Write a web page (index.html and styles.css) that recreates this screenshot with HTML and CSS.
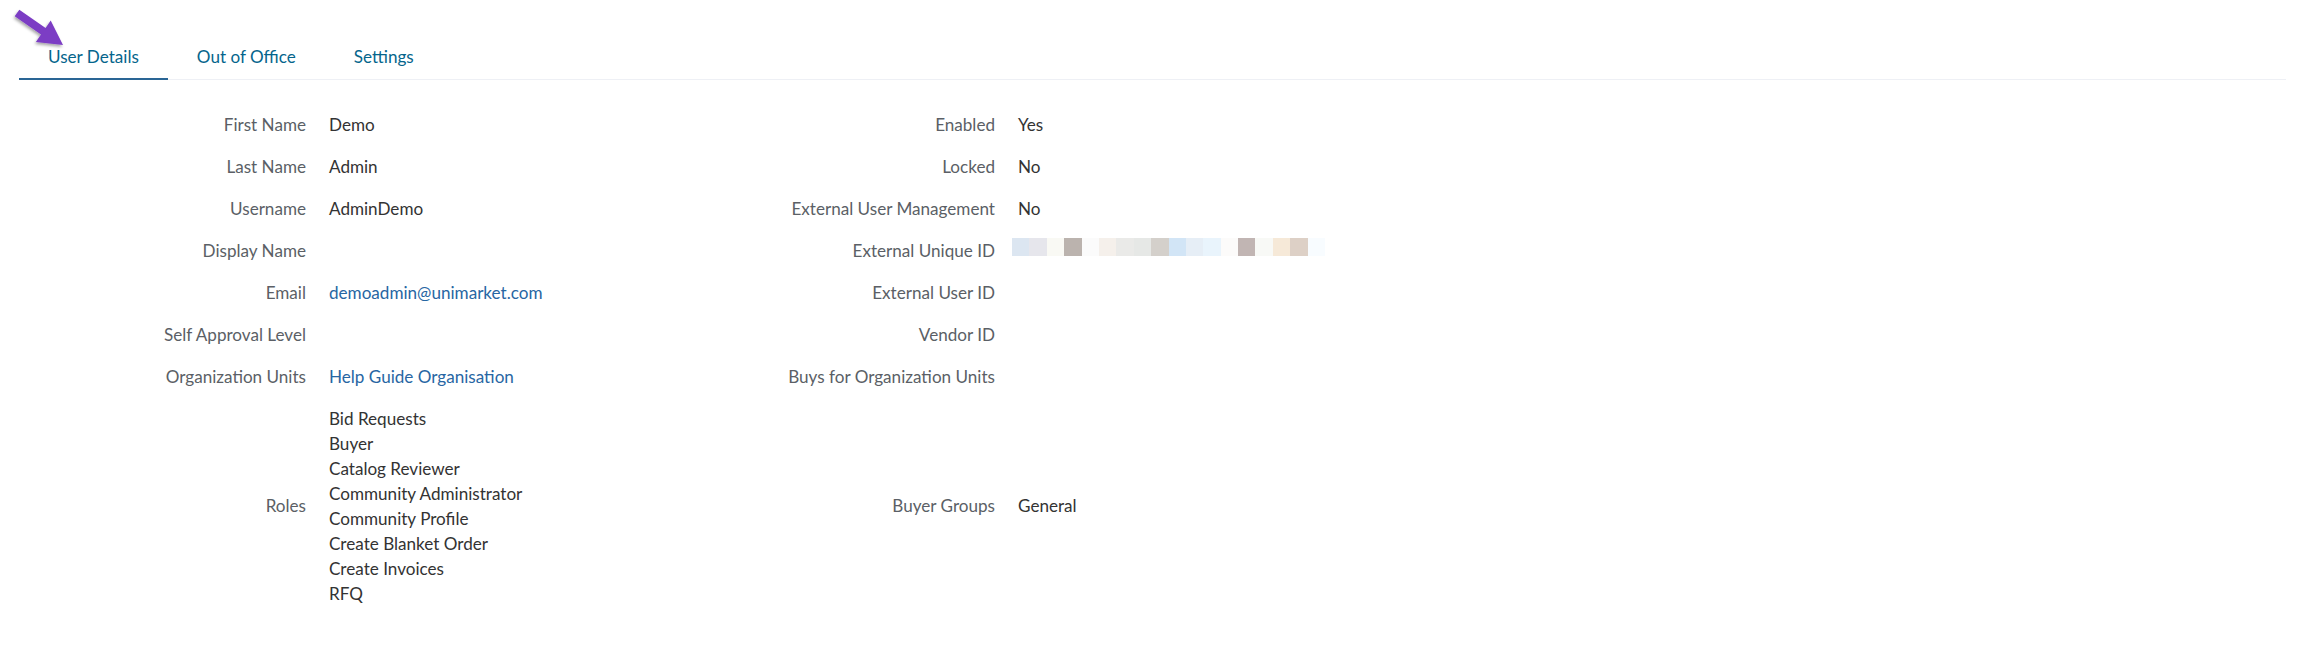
FILE: index.html
```html
<!DOCTYPE html>
<html lang="en">
<head>
  <meta charset="UTF-8">
  <title>User Details</title>
  <link rel="stylesheet" href="styles.css">
</head>
<body>
  <div class="page">
    <svg class="pointer" width="72" height="56" viewBox="0 0 72 56">
      <defs>
        <filter id="shade" x="-20%" y="-20%" width="150%" height="150%">
          <feDropShadow dx="-1" dy="2" stdDeviation="1.6" flood-color="#000" flood-opacity="0.35"/>
        </filter>
      </defs>
      <polygon filter="url(#shade)" fill="#7b3cc4"
        points="19.3,9.7 45.6,28 50.7,20.6 63,45 35.9,42 41,34.6 14.7,16.3"/>
    </svg>

    <div class="tabs">
      <a class="tab active">User Details</a>
      <a class="tab">Out of Office</a>
      <a class="tab">Settings</a>
    </div>

    <div class="details">
      <div class="label">First Name</div>
      <div class="value">Demo</div>
      <div class="label">Enabled</div>
      <div class="value">Yes</div>

      <div class="label">Last Name</div>
      <div class="value">Admin</div>
      <div class="label">Locked</div>
      <div class="value">No</div>

      <div class="label">Username</div>
      <div class="value">AdminDemo</div>
      <div class="label">External User Management</div>
      <div class="value">No</div>

      <div class="label">Display Name</div>
      <div class="value"></div>
      <div class="label">External Unique ID</div>
      <div class="value">
        <div class="blurred">
          <span style="background:#dce6f1"></span>
          <span style="background:#e6e6ec"></span>
          <span style="background:#f9f9f4"></span>
          <span style="background:#bbb3ae"></span>
          <span style="background:#fbfbfb"></span>
          <span style="background:#f5f0eb"></span>
          <span style="background:#eaeae8"></span>
          <span style="background:#e6e8e6"></span>
          <span style="background:#d4d0cb"></span>
          <span style="background:#d2e5f6"></span>
          <span style="background:#e6eef6"></span>
          <span style="background:#e9f4fc"></span>
          <span style="background:#fcfbfa"></span>
          <span style="background:#c1b5b3"></span>
          <span style="background:#f8f9f6"></span>
          <span style="background:#f6e9d8"></span>
          <span style="background:#ddd0c6"></span>
          <span style="background:#f8fcff"></span>
        </div>
      </div>

      <div class="label">Email</div>
      <div class="value"><a class="link">demoadmin@unimarket.com</a></div>
      <div class="label">External User ID</div>
      <div class="value"></div>

      <div class="label">Self Approval Level</div>
      <div class="value"></div>
      <div class="label">Vendor ID</div>
      <div class="value"></div>

      <div class="label">Organization Units</div>
      <div class="value"><a class="link">Help Guide Organisation</a></div>
      <div class="label">Buys for Organization Units</div>
      <div class="value"></div>

      <div class="label">Roles</div>
      <div class="value">
        <ul class="roles">
          <li>Bid Requests</li>
          <li>Buyer</li>
          <li>Catalog Reviewer</li>
          <li>Community Administrator</li>
          <li>Community Profile</li>
          <li>Create Blanket Order</li>
          <li>Create Invoices</li>
          <li>RFQ</li>
        </ul>
      </div>
      <div class="label">Buyer Groups</div>
      <div class="value">General</div>
    </div>
  </div>
</body>
</html>
```

FILE: styles.css
```css
* {
  box-sizing: border-box;
  margin: 0;
  padding: 0;
}

body {
  background: #ffffff;
  color: #333333;
  font-family: Lato, 'Noto Sans', sans-serif;
  font-size: 17.1px;
  line-height: 25px;
}

.page {
  position: relative;
  padding: 32px 20px 0 19px;
}

.pointer {
  position: absolute;
  top: 0;
  left: 0;
}

.tabs {
  display: flex;
  border-bottom: 1px solid #eef0f5;
}

.tab {
  padding: 12px 29px 10px 29px;
  color: #05658c;
  cursor: pointer;
}

.tab.active {
  border-bottom: 2px solid #2a6595;
  margin-bottom: -1px;
  padding-bottom: 9px;
}

.details {
  display: grid;
  grid-template-columns: 287px 336px 307px 1fr;
  column-gap: 23px;
  align-items: center;
  margin-top: 23px;
}

.label,
.value {
  padding: 8.5px 0;
  min-height: 42px;
}

.label {
  text-align: right;
  color: #5b5f66;
}

.value {
  color: #333333;
}

.link {
  color: #2766a3;
  cursor: pointer;
}

.roles {
  list-style: none;
}

.blurred {
  display: flex;
  height: 18px;
  margin-left: -6px;
}

.blurred span {
  width: 17.4px;
  height: 18px;
}
```
